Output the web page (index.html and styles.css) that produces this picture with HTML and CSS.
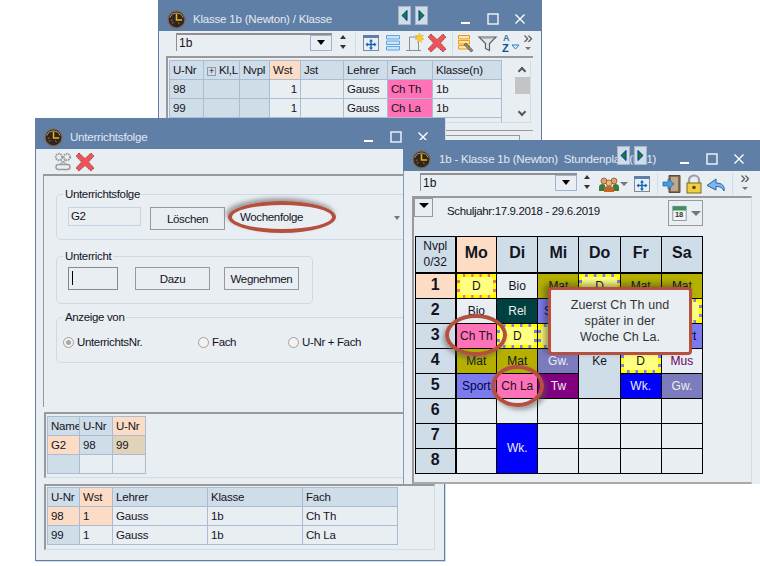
FILE: index.html
```html
<!DOCTYPE html>
<html lang="de">
<head>
  <meta charset="utf-8"/>
  <title>Unterrichtsfolge</title>
  <link rel="stylesheet" href="styles.css">
</head>
<body>

<!-- icon sprite -->
<svg class="sprite" xmlns="http://www.w3.org/2000/svg">
  <symbol id="i-clock" viewBox="0 0 20 20">
    <circle cx="10" cy="10" r="9" fill="#2b2622" stroke="#7d6a58" stroke-width="1.4"/>
    <path d="M3 8a7.5 7.5 0 0 1 14 0" fill="none" stroke="#c9a98c" stroke-width="1"/>
    <path d="M10 4v6.5h6" fill="none" stroke="#f0b400" stroke-width="1.6"/>
    <path d="M4 11l2-.5M5 14l2-1M13 15l-1-2" stroke="#d9603a" stroke-width="1"/>
  </symbol>
  <symbol id="i-move" viewBox="0 0 20 20">
    <rect x="2.5" y="2.5" width="15" height="15" fill="#e8eef4" stroke="#7e8c9a"/>
    <rect x="2" y="2" width="16" height="3" fill="#5f7fa7"/>
    <path d="M10 7v9M5.5 11.5h9" stroke="#1464b4" stroke-width="1.4"/>
    <path d="M10 6l-2 2.4h4zM10 17l-2-2.4h4zM4.5 11.5l2.4-2v4zM15.500 11.500l-2.400-2v4z" fill="#1464b4"/>
  </symbol>
  <symbol id="i-rows" viewBox="0 0 20 20">
    <path d="M3.500 2.500h13v3.500h-13zM3.500 8h13v3.500h-13zM3.500 13.500h13v3.500h-13z" fill="#cfe2f5" stroke="#5aa5ec"/>
  </symbol>
  <symbol id="i-new" viewBox="0 0 20 20">
    <path d="M4.500 17v-13h9M13.500 8v9M1 17.500h15" fill="none" stroke="#8a8f94" stroke-width="1"/>
    <path d="M14.500 0l1 3 3-1-2 2.500 2.500 1.500-3 .5.500 3-2-2-2 2 .500-3-3-.5 2.500-1.500-2-2.500 3 1z" fill="#f7d21e" stroke="#e89b2a" stroke-width=".5"/>
  </symbol>
  <symbol id="i-del" viewBox="0 0 20 20">
    <path d="M4 1l6 5.500 6-5.500 3 3-5.500 6 5.500 6-3 3-6-5.500-6 5.500-3-3 5.500-6-5.500-6z" fill="#f0525a" stroke="#8c4a4a" stroke-width="1" stroke-dasharray="1.500 .8"/>
  </symbol>
  <symbol id="i-list" viewBox="0 0 20 20">
    <path d="M2.500 2.500h11v3.500h-11zM2.500 7.500h11v3.500h-11zM2.500 12.500h11v3.500h-11z" fill="#fde3b0" stroke="#ef9a12"/>
    <path d="M10 10l7 7.500-2 1.500-7-7.500z" fill="#8a8a70" stroke="#444" stroke-width=".6"/>
  </symbol>
  <symbol id="i-filter" viewBox="0 0 20 20">
    <path d="M1 4h17l-6.500 6.500v7l-4-2v-5z" fill="#dfe4e9" stroke="#5a5f64" stroke-width="1.200"/>
    <path d="M4 5.500h11" stroke="#b5bcc4"/>
  </symbol>
  <symbol id="i-people" viewBox="0 0 22 20">
    <circle cx="6" cy="7" r="3" fill="#e0a070" stroke="#7a4a20" stroke-width=".7"/>
    <circle cx="16" cy="7" r="3" fill="#e0a070" stroke="#7a4a20" stroke-width=".7"/>
    <circle cx="11" cy="9" r="3" fill="#f0b880" stroke="#7a4a20" stroke-width=".7"/>
    <path d="M1 17v-4q0-3 4-3l2 1v6zM21 17v-4q0-3-4-3l-2 1v6z" fill="#3f7a3a"/>
    <path d="M6 18v-3q0-3 5-3t5 3v3z" fill="#c2662a"/>
  </symbol>
  <symbol id="i-door" viewBox="0 0 20 20">
    <path d="M7 1.500h11v17h-11z" fill="#8a6a50" stroke="#55504a"/>
    <path d="M9 3h7v14h-7z" fill="#c0a88c"/>
    <path d="M1 8h5v-3l6 5-6 5v-3h-5z" fill="#4a9ae0" stroke="#1d63a8" stroke-width=".7"/>
  </symbol>
  <symbol id="i-lock" viewBox="0 0 20 20">
    <path d="M5 10v-4a5 4.500 0 0 1 10 0v4" fill="none" stroke="#9aa0a6" stroke-width="2.200"/>
    <rect x="3" y="9" width="14" height="10" fill="#f0d040" stroke="#7a6a20"/>
    <circle cx="10" cy="13.500" r="1.800" fill="#5a4a10"/>
  </symbol>
  <symbol id="i-undo" viewBox="0 0 20 20">
    <path d="M18 17c1-5-2-8-8-8v-4l-9 6.500 9 4.500v-3.500c4 0 6 1 8 4.500z" fill="#7eb6ea" stroke="#1d63a8"/>
  </symbol>
  <symbol id="i-link" viewBox="0 0 20 20">
    <circle cx="6" cy="5" r="3.200" fill="none" stroke="#9a9a9a" stroke-width="2" stroke-dasharray="1.500 .8"/>
    <circle cx="14" cy="5" r="3.200" fill="none" stroke="#9a9a9a" stroke-width="2" stroke-dasharray="1.500 .8"/>
    <path d="M7 8l6 4M13 8l-6 4" stroke="#aaa" stroke-width="1.200"/>
    <rect x="3" y="12.500" width="14" height="5" rx="2.500" fill="none" stroke="#9a9a9a" stroke-width="1.400"/>
  </symbol>
  <symbol id="i-min" viewBox="0 0 12 12"><rect x="1" y="9" width="9" height="2" fill="#fff"/></symbol>
  <symbol id="i-max" viewBox="0 0 12 12"><rect x="1" y="1" width="10" height="10" fill="none" stroke="#fff" stroke-width="1.300"/></symbol>
  <symbol id="i-close" viewBox="0 0 12 12"><path d="M1.500 1.500l9 9M10.500 1.500l-9 9" stroke="#fff" stroke-width="1.400"/></symbol>
  <symbol id="i-prev" viewBox="0 0 13 19"><path d="M9.500 3.500v12l-6-6z" fill="#0a8a1e" stroke="#1010c0"/></symbol>
  <symbol id="i-next" viewBox="0 0 13 19"><path d="M3.500 3.500v12l6-6z" fill="#0a8a1e" stroke="#1010c0"/></symbol>
</svg>

<div class="desktop">

  <!-- Klassen window -->
  <section class="win win-klasse">
    <header class="titlebar">
      <svg class="app-icon"><use href="#i-clock"/></svg>
      <span class="title">Klasse 1b (Newton) / Klasse</span>
      <div class="nav-arrows nav-klasse">
        <svg><use href="#i-prev"/></svg><svg><use href="#i-next"/></svg>
      </div>
      <div class="controls">
        <svg><use href="#i-min"/></svg><svg><use href="#i-max"/></svg><svg><use href="#i-close"/></svg>
      </div>
    </header>
    <div class="toolbar">
      <div class="combo combo-klasse"><span>1b</span><i class="combo-btn"></i></div>
      <div class="spinner"></div>
      <div class="sep sep-a"></div>
      <svg class="tool"><use href="#i-move"/></svg>
      <svg class="tool"><use href="#i-rows"/></svg>
      <svg class="tool"><use href="#i-new"/></svg>
      <svg class="tool"><use href="#i-del"/></svg>
      <div class="sep sep-b"></div>
      <svg class="tool"><use href="#i-list"/></svg>
      <svg class="tool"><use href="#i-filter"/></svg>
      <svg class="tool" viewBox="0 0 22 20">
        <text x="4" y="8" font-size="9" font-weight="bold" fill="#3c6ea8">A</text>
        <text x="3" y="19" font-size="11" font-weight="bold" fill="#0c4f9c">Z</text>
        <path d="M13 12h7l-3.500 4z" fill="none" stroke="#2a7ac0"/>
      </svg>
      <div class="overflow"><span>»</span><i></i></div>
    </div>
    <div class="pane pane-klasse">
      <div class="grid-wrap">
        <table class="data data-klasse">
          <colgroup><col class="w34"><col class="w36"><col class="w30"><col class="w31"><col class="w43"><col class="w44"><col class="w45"><col class="w69"></colgroup>
          <tr>
            <th>U-Nr</th><th><span class="plus">+</span>Kl,L</th><th>Nvpl</th><th class="peach">Wst</th><th>Jst</th><th>Lehrer</th><th>Fach</th><th>Klasse(n)</th>
          </tr>
          <tr><td class="blue">98</td><td class="blue"></td><td class="blue"></td><td class="num">1</td><td></td><td>Gauss</td><td class="pink">Ch Th</td><td>1b</td></tr>
          <tr><td class="blue">99</td><td class="blue"></td><td class="blue"></td><td class="num">1</td><td></td><td>Gauss</td><td class="pink">Ch La</td><td>1b</td></tr>
          <tr><td class="blue"></td><td class="blue"></td><td class="blue"></td><td></td><td></td><td></td><td></td><td>1a, 1b, 2a</td></tr>
        </table>
        <div class="scrollbar"><b class="chev-up"></b><b class="thumb"></b><b class="chev-down"></b></div>
      </div>
    </div>
    <div class="pane-rule"></div>
    <div class="hidden-box"></div>
  </section>

  <!-- Unterrichtsfolge window -->
  <section class="win win-folge">
    <header class="titlebar">
      <svg class="app-icon"><use href="#i-clock"/></svg>
      <span class="title">Unterrichtsfolge</span>
      <div class="controls">
        <svg><use href="#i-min"/></svg><svg><use href="#i-max"/></svg><svg><use href="#i-close"/></svg>
      </div>
    </header>
    <div class="toolbar toolbar-folge">
      <svg class="tool"><use href="#i-link"/></svg>
      <svg class="tool"><use href="#i-del"/></svg>
    </div>
    <div class="form-pane">
      <fieldset class="group group-wide group-folge">
        <legend>Unterrichtsfolge</legend>
        <div class="form-row">
          <div class="textbox">G2</div>
          <div class="btn btn-loeschen">Löschen</div>
          <div class="select"><span>Wochenfolge</span><i class="select-arrow"></i></div>
        </div>
      </fieldset>
      <fieldset class="group group-unterricht">
        <legend>Unterricht</legend>
        <div class="form-row">
          <div class="input"><i class="caret"></i></div>
          <div class="btn btn-dazu">Dazu</div>
          <div class="btn btn-weg">Wegnehmen</div>
        </div>
      </fieldset>
      <fieldset class="group group-wide group-anzeige">
        <legend>Anzeige von</legend>
        <div class="form-row radios">
          <label class="radio radio-nr"><i class="dot checked"></i>UnterrichtsNr.</label>
          <label class="radio radio-fach"><i class="dot"></i>Fach</label>
          <label class="radio"><i class="dot"></i>U-Nr + Fach</label>
        </div>
      </fieldset>
    </div>
    <div class="pane pane-gruppe">
      <table class="data data-gruppe">
        <colgroup><col class="w32"><col class="w33"><col class="w33"></colgroup>
        <tr><th>Name</th><th>U-Nr</th><th class="peach">U-Nr</th></tr>
        <tr><td class="peach">G2</td><td class="blue">98</td><td class="tan">99</td></tr>
        <tr><td class="blue"></td><td></td><td></td></tr>
      </table>
    </div>
    <div class="pane pane-liste">
      <table class="data data-liste">
        <colgroup><col class="w32"><col class="w33"><col class="w95"><col class="w95"><col class="w95"></colgroup>
        <tr><th>U-Nr</th><th class="peach">Wst</th><th>Lehrer</th><th>Klasse</th><th>Fach</th></tr>
        <tr><td class="peach">98</td><td class="peach">1</td><td>Gauss</td><td>1b</td><td>Ch Th</td></tr>
        <tr><td class="blue">99</td><td>1</td><td>Gauss</td><td>1b</td><td>Ch La</td></tr>
      </table>
    </div>
  </section>

  <!-- Stundenplan window -->
  <section class="win win-plan">
    <header class="titlebar">
      <svg class="app-icon"><use href="#i-clock"/></svg>
      <span class="title">1b - Klasse 1b (Newton)&nbsp; Stundenplan (Ka1)</span>
      <div class="nav-arrows nav-plan">
        <svg><use href="#i-prev"/></svg><svg><use href="#i-next"/></svg>
      </div>
      <div class="controls">
        <svg><use href="#i-min"/></svg><svg><use href="#i-max"/></svg><svg><use href="#i-close"/></svg>
      </div>
    </header>
    <div class="toolbar">
      <div class="combo combo-plan"><span>1b</span><i class="combo-btn"></i></div>
      <div class="spinner spinner-plan"></div>
      <svg class="tool tool-people"><use href="#i-people"/></svg>
      <i class="mini-arrow"></i>
      <svg class="tool tool-move"><use href="#i-move"/></svg>
      <div class="sep sep-a"></div>
      <svg class="tool"><use href="#i-door"/></svg>
      <svg class="tool"><use href="#i-lock"/></svg>
      <svg class="tool"><use href="#i-undo"/></svg>
      <div class="sep sep-c"></div>
      <div class="overflow overflow-plan"><span>»</span><i></i></div>
    </div>
    <div class="plan-pane">
      <div class="plan-head">
        <div class="drop-btn"></div>
        <span class="schuljahr">Schuljahr:17.9.2018 - 29.6.2019</span>
        <div class="cal-btn">
          <svg viewBox="0 0 18 20">
            <rect x="1" y="2" width="16" height="17" fill="#f4f4f4" stroke="#7e8c9a"/>
            <rect x="1" y="2" width="16" height="5" fill="#3f8f60"/>
            <text x="3.500" y="15" font-size="9" font-weight="bold" fill="#333">18</text>
          </svg>
          <i></i>
        </div>
      </div>
      <table class="plan">
        <colgroup><col class="first"><col><col><col><col><col><col></colgroup>
        <tr class="days">
          <th class="corner">Nvpl<br>0/32</th><th class="peach">Mo</th><th>Di</th><th>Mi</th><th>Do</th><th>Fr</th><th>Sa</th>
        </tr>
        <tr>
          <th class="peach">1</th>
          <td><div class="dash dash-red">D</div></td><td>Bio</td><td class="olive">Mat</td><td><div class="dash dash-blue">D</div></td><td class="olive">Mat</td><td class="olive">Mat</td>
        </tr>
        <tr>
          <th>2</th>
          <td>Bio</td><td class="teal">Rel</td><td class="peri">Sport</td><td class="olive"></td><td class="olive"></td><td><div class="dash dash-blue"></div></td>
        </tr>
        <tr>
          <th>3</th>
          <td class="pink">Ch Th</td><td><div class="dash dash-blue">D</div></td><td><div class="dash dash-blue"></div></td><td class="olive"></td><td class="olive"></td><td class="peri">Sport</td>
        </tr>
        <tr>
          <th>4</th>
          <td class="olive">Mat</td><td class="olive">Mat</td><td class="slate">Gw.</td><td class="blue top" rowspan="2">Ke</td><td><div class="dash dash-blue">D</div></td><td class="mus">Mus</td>
        </tr>
        <tr>
          <th>5</th>
          <td class="peri">Sport</td><td class="pink">Ch La</td><td class="purple">Tw</td><td class="wk">Wk.</td><td class="slate">Gw.</td>
        </tr>
        <tr><th>6</th><td></td><td></td><td></td><td></td><td></td><td></td></tr>
        <tr><th>7</th><td></td><td class="wk" rowspan="2">Wk.</td><td></td><td></td><td></td><td></td></tr>
        <tr><th>8</th><td></td><td></td><td></td><td></td><td></td></tr>
      </table>
    </div>
  </section>

  <!-- annotations over the screenshot -->
  <div class="ring ring-woche"></div>
  <div class="ring ring-chth"></div>
  <div class="ring ring-chla"></div>
  <div class="callout">Zuerst Ch Th und<br>später in der<br>Woche Ch La.</div>

</div>
</body>
</html>
```

FILE: styles.css
```css
* {
  box-sizing: border-box;
}
html, body {
  margin: 0;
  background: #fff;
}
body {
  font-family: "Liberation Sans", Arial, sans-serif;
  font-size: 12px;
  color: #14141e;
}
.sprite {
  position: absolute;
  width: 0;
  height: 0;
}
.desktop {
  position: relative;
  width: 760px;
  height: 566px;
  overflow: hidden;
}

/* windows */
.win {
  position: absolute;
  background: #e9eef3;
  border: 1px solid #5f7fa7;
  border-top: none;
}
.win-klasse {
  left: 158px;
  top: 0;
  width: 384px;
  height: 145px;
}
.win-folge {
  left: 35px;
  top: 118px;
  width: 410px;
  height: 443px;
  box-shadow: 1px 1px 0 #cfdde8;
}
.win-plan {
  left: 403px;
  top: 140px;
  width: 357px;
  height: 344px;
  border: none;
  border-left: 1px solid #7f9abb;
}
.titlebar {
  position: relative;
  display: flex;
  align-items: center;
  height: 31px;
  margin: 0 -1px;
  padding: 7px 0 0 9px;
  background: #5f7fa7;
}
.app-icon {
  flex: none;
  width: 19px;
  height: 19px;
}
.title {
  margin-left: 7px;
  color: #e3e9f1;
  font-size: 11.5px;
  letter-spacing: -.2px;
  white-space: nowrap;
}
.win-plan .title {
  margin-left: 8px;
}
.controls {
  display: flex;
  align-items: center;
  margin-left: auto;
  padding-right: 16px;
}
.controls svg {
  width: 12px;
  height: 12px;
  margin-left: 15px;
}
.nav-arrows {
  position: absolute;
  top: 6px;
  display: flex;
  gap: 4px;
}
.nav-arrows svg {
  width: 13px;
  height: 19px;
  background: #cfdde8;
  border: 1px solid #a6b4c4;
}
.nav-klasse {
  left: 240px;
}
.nav-plan {
  left: 214px;
}

/* toolbars */
.toolbar {
  display: flex;
  align-items: center;
  height: 25px;
}
.toolbar-folge {
  padding-left: 16px;
}
.tool {
  flex: none;
  width: 22px;
  height: 20px;
  font-family: "Liberation Sans", sans-serif;
}
.win-klasse .tool {
  margin-top: -1px;
}
.combo {
  position: relative;
  display: flex;
  align-items: center;
  height: 18px;
  margin-top: -4px;
  padding-left: 2px;
  border-top: 2px solid #8f8f8f;
  border-left: 1px solid #8f8f8f;
}
.combo-klasse {
  width: 156px;
  margin-left: 17px;
}
.combo-plan {
  width: 157px;
  margin-left: 16px;
}
.combo-btn {
  position: absolute;
  right: 0;
  top: 0;
  width: 22px;
  height: 16px;
  border: 1px solid #9fb5cc;
}
.combo-btn::after {
  content: "";
  position: absolute;
  left: 6px;
  top: 4px;
  border: 4px solid transparent;
  border-top: 5px solid #000;
  border-bottom: none;
}
.spinner {
  position: relative;
  flex: none;
  width: 10px;
  height: 14px;
  margin: -4px 0 0 6px;
}
.spinner-plan {
  margin-left: 5px;
}
.spinner::before,
.spinner::after {
  content: "";
  position: absolute;
  left: 2px;
  border: 3px solid transparent;
}
.spinner::before {
  top: 0;
  border-top: none;
  border-bottom: 4px solid #333;
}
.spinner::after {
  bottom: 0;
  border-bottom: none;
  border-top: 4px solid #333;
}
.sep {
  flex: none;
  width: 1px;
  height: 22px;
  background: #cfdde8;
}
.sep-a {
  margin: 0 4px 0 7px;
}
.sep-b {
  margin: 0 2px 0 4px;
}
.sep-c {
  margin-left: 5px;
}
.tool-people {
  margin-left: 6px;
}
.mini-arrow {
  flex: none;
  width: 0;
  height: 0;
  border: 4px solid transparent;
  border-top: 4px solid #777;
  border-bottom: none;
}
.tool-move {
  margin-left: 3px;
}
.win-plan .sep-a {
  margin: 0 3px 0 4px;
}
.overflow {
  flex: none;
  width: 12px;
  height: 22px;
  margin-left: 1px;
  color: #555;
  font-size: 17px;
  line-height: 10px;
  text-align: center;
}
.overflow i {
  display: block;
  width: 0;
  margin: 4px auto 0;
  border: 3px solid transparent;
  border-top: 3px solid #777;
  border-bottom: none;
}
.overflow-plan {
  margin-left: 6px;
}

/* data grids */
.pane {
  margin-left: 7px;
  border-top: 2px solid #999;
  border-left: 2px solid #999;
}
.pane-klasse {
  width: 367px;
  padding: 2px 0 0 1px;
}
.grid-wrap {
  display: flex;
  width: 362px;
  height: 63px;
  border-bottom: 1px solid #cfdde8;
  border-right: 1px solid #cfdde8;
  overflow: hidden;
}
.pane-rule {
  width: 367px;
  margin: 7px 0 0 7px;
  border-top: 1px solid #999;
}
.hidden-box {
  width: 353px;
  height: 10px;
  margin: 4px 0 0 8px;
  border-top: 1px solid #999;
  border-right: 1px solid #999;
}
.data {
  flex: none;
  border-collapse: collapse;
  table-layout: fixed;
  width: 0;
  font-size: 11.5px;
  letter-spacing: -.2px;
}
.data th,
.data td {
  height: 19px;
  padding: 0 0 0 3px;
  border: 1px solid #a9bcd3;
  font-weight: normal;
  text-align: left;
  white-space: nowrap;
  overflow: hidden;
}
.data th {
  background: #cfdde8;
}
.data .num {
  padding-right: 3px;
  text-align: right;
}
.data th.peach,
.data td.peach {
  background: #fcdcc4;
}
.data td.blue {
  background: #cfdde8;
}
.data td.pink {
  background: #ff72b8;
}
.data td.tan {
  background: #e0d3b8;
}
.plus {
  display: inline-block;
  width: 9px;
  height: 9px;
  margin-right: 3px;
  border: 1px solid #8a9bb0;
  font-size: 9px;
  line-height: 7px;
  text-align: center;
}
.w30 { width: 30px; }
.w31 { width: 31px; }
.w32 { width: 32px; }
.w33 { width: 33px; }
.w34 { width: 34px; }
.w36 { width: 36px; }
.w43 { width: 43px; }
.w44 { width: 44px; }
.w45 { width: 45px; }
.w69 { width: 69px; }
.w95 { width: 95px; }

.scrollbar {
  position: relative;
  flex: none;
  width: 29px;
}
.thumb {
  position: absolute;
  left: 13px;
  top: 17px;
  width: 15px;
  height: 17px;
  background: #c4c4c4;
}
.chev-up,
.chev-down {
  position: absolute;
  left: 17px;
  width: 6px;
  height: 6px;
  border-left: 2px solid #555;
  border-top: 2px solid #555;
}
.chev-up {
  top: 8px;
  transform: rotate(45deg);
}
.chev-down {
  top: 49px;
  transform: rotate(225deg);
}

/* form */
.form-pane {
  height: 233px;
  margin-left: 7px;
  padding: 11px 0 0 12px;
  border-top: 2px solid #999;
  border-left: 1px solid #999;
  font-size: 11.5px;
  letter-spacing: -.35px;
}
.group {
  margin: 0;
  padding: 0 6px;
  border: 1px solid #cddae6;
  border-radius: 5px;
}
.group legend {
  padding: 0 2px;
  line-height: 14px;
}
.group-wide {
  width: 420px;
}
.group-folge {
  padding-bottom: 9px;
}
.group-unterricht {
  width: 257px;
  margin-top: 9px;
  padding-bottom: 13px;
}
.group-anzeige {
  margin-top: 6px;
  padding-bottom: 13px;
}
.form-row {
  display: flex;
  align-items: flex-start;
  margin: 6px 0 0 5px;
}
.group-unterricht .form-row {
  margin-top: 4px;
}
.textbox {
  width: 73px;
  height: 19px;
  padding-left: 2px;
  border: 1px solid #c5d3e2;
  line-height: 17px;
}
.btn {
  width: 75px;
  height: 23px;
  border: 1px solid #999;
  line-height: 23px;
  text-align: center;
}
.btn-loeschen {
  margin-left: 9px;
}
.select {
  position: relative;
  width: 172px;
  margin-left: 4px;
  padding: 4px 0 0 11px;
}
.select-arrow {
  position: absolute;
  right: 1px;
  top: 9px;
  border: 3px solid transparent;
  border-top: 4px solid #777;
  border-bottom: none;
}
.input {
  width: 50px;
  height: 23px;
  padding: 3px 0 0 3px;
  border: 1px solid #888;
}
.caret {
  display: block;
  width: 1px;
  height: 14px;
  background: #000;
}
.btn-dazu {
  margin-left: 17px;
}
.btn-weg {
  margin-left: 14px;
}
.radios {
  margin: 11px 0 0;
}
.radio {
  display: flex;
  align-items: center;
  gap: 3px;
  height: 14px;
}
.radio-nr {
  width: 135px;
}
.radio-fach {
  width: 90px;
}
.dot {
  position: relative;
  width: 11px;
  height: 11px;
  border: 1px solid #a0a0a0;
  border-radius: 50%;
  background: #f2f2f2;
}
.dot.checked::after {
  content: "";
  position: absolute;
  left: 2px;
  top: 2px;
  width: 5px;
  height: 5px;
  border-radius: 50%;
  background: #a8a8a8;
}
.pane-gruppe {
  height: 66px;
  margin: 5px 0 0 8px;
  padding: 2px 0 0 1px;
  border-bottom: 1px solid #cfdde8;
}
.pane-liste {
  width: 391px;
  height: 66px;
  margin: 6px 0 0 8px;
  padding: 1px 0 0 1px;
  border-bottom: 1px solid #cfdde8;
  border-right: 1px solid #cfdde8;
}

/* timetable */
.plan-pane {
  height: 288px;
  width: 340px;
  margin-left: 8px;
  border: 2px solid #999;
  border-right: 1px solid #cfdde8;
  border-bottom: 2px solid #aaa;
}
.plan-head {
  display: flex;
  align-items: flex-start;
  height: 38px;
}
.drop-btn {
  position: relative;
  width: 19px;
  height: 19px;
  border: 1px solid #999;
}
.drop-btn::after {
  content: "";
  position: absolute;
  left: 4px;
  top: 4px;
  border: 5px solid transparent;
  border-top: 5px solid #000;
  border-bottom: none;
}
.schuljahr {
  margin: 7px 0 0 14px;
  font-size: 11.5px;
  letter-spacing: -.35px;
}
.cal-btn {
  display: flex;
  align-items: center;
  gap: 4px;
  width: 35px;
  height: 26px;
  margin: 2px 48px 0 auto;
  padding-left: 3px;
  border: 1px solid #999;
}
.cal-btn svg {
  width: 15px;
  height: 18px;
  font-family: "Liberation Sans", sans-serif;
}
.cal-btn i {
  border: 5px solid transparent;
  border-top: 5px solid #777;
  border-bottom: none;
}
.plan {
  margin-left: 1px;
  border-collapse: collapse;
  table-layout: fixed;
  width: 288px;
  border: 1px solid #000;
}
.plan .first {
  width: 40px;
}
.plan th,
.plan td {
  height: 25px;
  padding: 0;
  border: 1px solid #000;
  text-align: center;
  white-space: nowrap;
  overflow: hidden;
}
.plan th {
  padding-bottom: 2px;
  background: #cfdde8;
  font-size: 16px;
  font-weight: bold;
}
.plan tr > th:first-child {
  border-right-width: 2px;
}
.plan .days th {
  height: 36px;
  border-bottom-width: 2px;
}
.plan th.corner {
  padding-bottom: 1px;
  font-size: 12px;
  font-weight: normal;
  line-height: 16px;
}
.plan th.peach {
  background: #fcdcc4;
}
.plan td.olive {
  background: #b5b000;
}
.plan td.pink {
  background: #ff72b8;
}
.plan td.teal {
  background: #004040;
  color: #f0f0f0;
}
.plan td.peri {
  background: #7b7bef;
  color: #000048;
}
.plan td.slate {
  background: #7b7bbd;
  color: #eee;
}
.plan td.purple {
  background: #800080;
  color: #f0f0f0;
}
.plan td.wk {
  background: #0000ff;
  color: #eee;
}
.plan td.blue {
  background: #cfdde8;
}
.plan td.top {
  vertical-align: top;
  line-height: 25px;
}
.plan td.mus {
  color: #6a0060;
}
.dash {
  height: 24px;
  border: 3px dashed #ffff00;
  line-height: 18px;
}
.dash-red {
  background: linear-gradient(#ffff80, #ffff80) padding-box, #f07070 border-box;
}
.dash-blue {
  background: linear-gradient(#ffff80, #ffff80) padding-box, #7b7bef border-box;
}

/* annotations */
.ring {
  position: absolute;
  border: 4px solid #b5503f;
  border-radius: 50%;
}
.ring-woche {
  left: 228px;
  top: 201px;
  width: 108px;
  height: 32px;
  box-shadow: -2px -3px 4px rgba(90, 90, 90, .55);
}
.ring-chth {
  left: 445px;
  top: 314px;
  width: 62px;
  height: 42px;
  box-shadow: -2px 3px 4px rgba(90, 90, 90, .5);
}
.ring-chla {
  left: 491px;
  top: 365px;
  width: 53px;
  height: 42px;
  box-shadow: 3px 3px 4px rgba(90, 90, 90, .5);
}
.callout {
  position: absolute;
  left: 548px;
  top: 287px;
  width: 144px;
  height: 68px;
  padding-top: 7px;
  border: 3px solid #b5503f;
  border-radius: 4px;
  background: #e9eef3;
  box-shadow: -4px -3px 6px rgba(40, 40, 40, .45);
  color: #333;
  font-size: 12.5px;
  letter-spacing: .1px;
  line-height: 16px;
  text-align: center;
}
```
